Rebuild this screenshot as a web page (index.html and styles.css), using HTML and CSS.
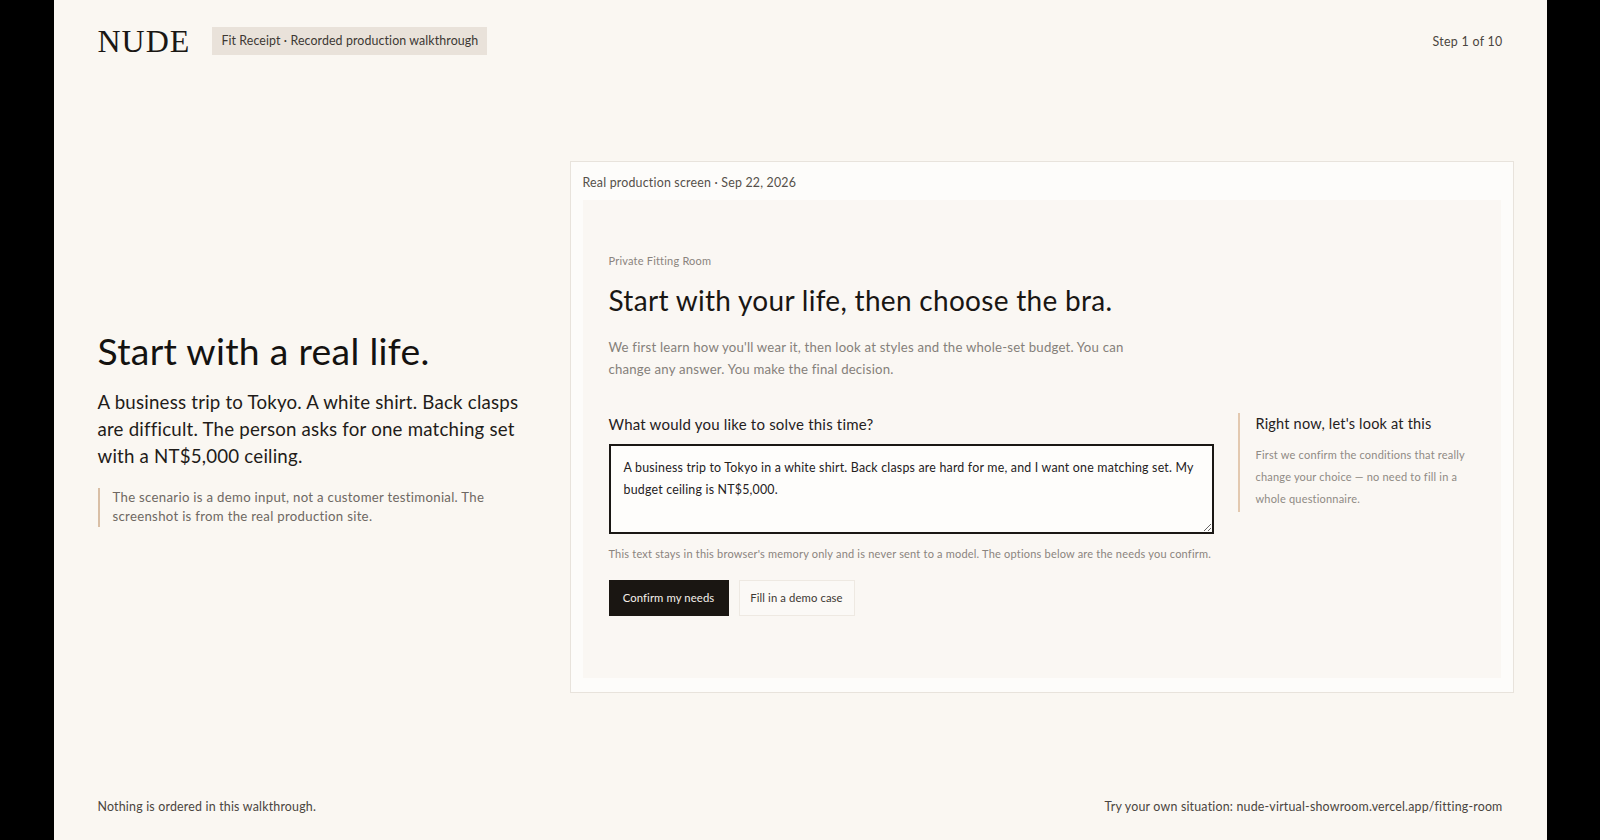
FILE: index.html
```html
<!DOCTYPE html>
<html lang="en">
<head>
<meta charset="utf-8">
<title>NUDE Fit Receipt</title>
<link rel="stylesheet" href="styles.css">
</head>
<body>
<div class="frame">
  <header class="top">
    <div class="brand">
      <span class="logo">NUDE</span>
      <span class="badge">Fit Receipt · Recorded production walkthrough</span>
    </div>
    <span class="step">Step 1 of 10</span>
  </header>
  <main class="stage">
    <section class="story">
      <h1>Start with a real life.</h1>
      <p class="lead">A business trip to Tokyo. A white shirt. Back clasps are difficult. The person asks for one matching set with a NT$5,000 ceiling.</p>
      <p class="note">The scenario is a demo input, not a customer testimonial. The screenshot is from the real production site.</p>
    </section>
    <section class="card">
      <div class="card-title">Real production screen · Sep 22, 2026</div>
      <div class="screen">
        <div class="eyebrow">Private Fitting Room</div>
        <h2>Start with your life, then choose the bra.</h2>
        <p class="intro">We first learn how you'll wear it, then look at styles and the whole-set budget. You can change any answer. You make the final decision.</p>
        <div class="columns">
          <div class="form">
            <label class="label" for="need">What would you like to solve this time?</label>
            <textarea class="input" id="need">A business trip to Tokyo in a white shirt. Back clasps are hard for me, and I want one matching set. My budget ceiling is NT$5,000.</textarea>
            <p class="helper">This text stays in this browser's memory only and is never sent to a model. The options below are the needs you confirm.</p>
            <div class="actions">
              <button class="btn primary">Confirm my needs</button>
              <button class="btn ghost">Fill in a demo case</button>
            </div>
          </div>
          <aside class="aside">
            <h3>Right now, let's look at this</h3>
            <p>First we confirm the conditions that really change your choice — no need to fill in a whole questionnaire.</p>
          </aside>
        </div>
      </div>
    </section>
  </main>
  <footer class="bottom">
    <span class="foot-left">Nothing is ordered in this walkthrough.</span>
    <span class="foot-right">Try your own situation: nude-virtual-showroom.vercel.app/fitting-room</span>
  </footer>
</div>
</body>
</html>
```
FILE: styles.css
```css
* { box-sizing: border-box; }
html, body { margin: 0; height: 100%; background: #000; overflow: hidden; }
body { display: flex; justify-content: center; font-family: "Lato", "Liberation Sans", sans-serif; color: #1a1714; }
.frame { width: 1493px; height: 840px; background: #faf7f2; display: flex; flex-direction: column; }

.top { display: flex; justify-content: space-between; align-items: center; padding: 27px 44px 0; }
.brand { display: flex; align-items: center; gap: 22px; }
.logo { font-family: "Liberation Serif", serif; font-size: 32px; line-height: 28px; letter-spacing: 1px; color: #1a1714; }
.badge { height: 28px; line-height: 28px; padding: 0 9px; background: #e9e2da; font-size: 12.4px; letter-spacing: 0.1px; color: #3d3833; }
.step { font-size: 12.4px; letter-spacing: 0.3px; color: #4a4540; }

.stage { flex: 1; display: grid; grid-template-columns: 472px 1fr; align-items: center; padding: 0 33px 0 44px; }
.story h1 { margin: 0; font-size: 37.3px; line-height: 48px; font-weight: 400; letter-spacing: 0.3px; color: #141210; }
.lead { margin: 14px 0 0; width: 440px; font-size: 18.7px; line-height: 27px; letter-spacing: 0.2px; color: #1f1c19; }
.note { margin: 18px 0 0; width: 445px; padding-left: 13px; border-left: 2px solid #d9bfa6; font-size: 13.2px; line-height: 19.5px; letter-spacing: 0.3px; color: #6e6862; }

.card { background: #fdfcfa; border: 1px solid #e8e3dc; padding: 12px 12px 14px; }
.card-title { font-size: 12.4px; line-height: 18px; letter-spacing: 0.2px; color: #55504a; margin-bottom: 8px; }
.screen { background: #faf7f3; padding: 53px 26px 62px; }
.eyebrow { font-size: 11px; line-height: 16px; letter-spacing: 0.2px; color: #8a847e; }
.screen h2 { margin: 13px 0 0; font-size: 28px; line-height: 36px; font-weight: 400; letter-spacing: 0.3px; color: #191613; }
.intro { margin: 18px 0 0; width: 540px; font-size: 13.2px; line-height: 22px; letter-spacing: 0.2px; color: #85807a; }
.columns { display: grid; grid-template-columns: 605px 1fr; gap: 24px; margin-top: 33px; align-items: start; }
.form { display: flex; flex-direction: column; align-items: flex-start; }
.label { font-size: 15px; line-height: 22px; letter-spacing: 0.2px; color: #25211d; margin-bottom: 9px; }
.input { display: block; width: 605px; height: 90px; padding: 11px 13px; border: 2px solid #1a1714; border-radius: 0; outline: none; background: #fefdfb; font: 12.4px/22px "Lato", "Liberation Sans", sans-serif; letter-spacing: 0.2px; color: #25211d; resize: vertical; }
.helper { margin: 12px 0 0; font-size: 11px; line-height: 16px; letter-spacing: 0.2px; color: #8a847e; }
.actions { display: flex; gap: 10px; margin-top: 18px; }
.btn { height: 36px; font: 11.3px/1 "Lato", "Liberation Sans", sans-serif; letter-spacing: 0.1px; border-radius: 0; }
.primary { width: 120px; background: #1a1612; border: 1px solid #1a1612; color: #f5f0ea; }
.ghost { width: 116px; background: #fbf9f6; border: 1px solid #eee9e2; color: #3d3833; }
.aside { height: 99px; padding-left: 16px; border-left: 2px solid #e3c9b0; }
.aside h3 { margin: 0; font-size: 14.5px; line-height: 22px; font-weight: 400; letter-spacing: 0.2px; color: #25211d; }
.aside p { margin: 9px 0 0; width: 210px; font-size: 11px; line-height: 22.4px; letter-spacing: 0.2px; color: #8f8a84; }

.bottom { display: flex; justify-content: space-between; padding: 0 44px 24px; font-size: 12.4px; line-height: 18px; letter-spacing: 0.2px; color: #4a4540; }
```
